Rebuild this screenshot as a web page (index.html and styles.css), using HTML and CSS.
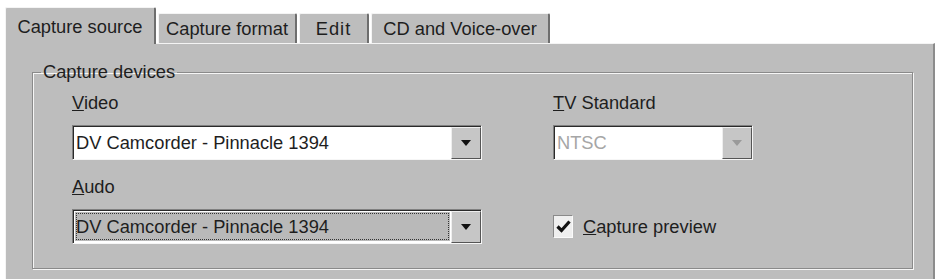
FILE: index.html
```html
<!DOCTYPE html>
<html lang="en">
<head>
    <meta charset="UTF-8">
    <title>Capture settings</title>
    <link rel="stylesheet" href="styles.css">
</head>
<body>
    <div class="dialog">
        <div class="tabs">
            <div class="tab active tab-source">Capture source</div>
            <div class="tab tab-format">Capture format</div>
            <div class="tab tab-edit">Edit</div>
            <div class="tab tab-cd">CD and Voice-over</div>
        </div>

        <div class="panel">
            <fieldset class="group">
                <legend>Capture devices</legend>
                <div class="fields">
                    <div class="field">
                        <div class="label"><u>V</u>ideo</div>
                        <div class="combo">
                            <span class="value">DV Camcorder - Pinnacle 1394</span>
                            <span class="drop"><span class="arrow"></span></span>
                        </div>
                    </div>

                    <div class="field">
                        <div class="label"><u>T</u>V Standard</div>
                        <div class="combo disabled">
                            <span class="value">NTSC</span>
                            <span class="drop"><span class="arrow"></span></span>
                        </div>
                    </div>

                    <div class="field">
                        <div class="label"><u>A</u>udo</div>
                        <div class="combo focused">
                            <span class="value">DV Camcorder - Pinnacle 1394</span>
                            <span class="drop"><span class="arrow"></span></span>
                        </div>
                    </div>

                    <div class="check-row">
                        <span class="checkbox">
                            <svg width="15" height="15" viewBox="0 0 15 15">
                                <path d="M1.5 7.5 L5.5 11.5 L13.5 2.5" fill="none" stroke="#111" stroke-width="3.2"/>
                            </svg>
                        </span>
                        <span class="label"><u>C</u>apture preview</span>
                    </div>
                </div>
            </fieldset>
        </div>
    </div>
</body>
</html>
```

FILE: styles.css
```css
   body {
       margin: 0;
       background: #ffffff;
       font-family: 'Liberation Sans', Arial, sans-serif;
       font-size: 18.3px;
       color: #1e1e1e;
       overflow: hidden;
   }

   .dialog {
       padding: 7px 2px 0 5px;
   }

/* 选项卡 */
   .tabs {
       display: flex;
       align-items: flex-end;
       height: 36px;
       position: relative;
       z-index: 1;
   }

   .tab {
       height: 30px;
       line-height: 29px;
       text-align: center;
       background: #bdbdbd;
       border-top: 1px solid #f4f4f4;
       border-left: 1px solid #f4f4f4;
       border-right: 2px solid #6e6e6e;
       margin-left: 2px;
       box-sizing: border-box;
       border-radius: 2px 2px 0 0;
       white-space: nowrap;
   }

   .tab.active {
       height: 37px;
       margin-bottom: -1px;
       margin-left: 0;
       line-height: 37px;
   }

   .tab-source { width: 151px; }
   .tab-format { width: 139px; }
   .tab-edit { width: 70px; letter-spacing: 1px; }
   .tab-cd { width: 179px; }

   .panel {
       background: #bdbdbd;
       border-top: 1px solid #f4f4f4;
       border-left: 1px solid #f4f4f4;
       border-right: 2px solid #8c8c8c;
       padding: 17px 20px 14px 26px;
       min-height: 236px;
       box-sizing: border-box;
   }

/* 分组框 */
   .group {
       margin: 0;
       padding: 9px 0 24px 39px;
       border: 1px solid #8a8a8a;
       box-shadow: inset 1px 1px 0 #f6f6f6, 1px 1px 0 #f6f6f6;
   }

   .group legend {
       margin-left: -31px;
       padding: 0 2px;
       line-height: 22px;
   }

   .fields {
       display: grid;
       grid-template-columns: 410px 200px;
       column-gap: 71px;
       row-gap: 16px;
   }

   .label {
       line-height: 22px;
   }

   .field .label {
       margin-bottom: 11px;
   }

/* 下拉框 */
   .combo {
       display: flex;
       height: 35px;
       background: #ffffff;
       border: 1px solid #808080;
       border-right-color: #f6f6f6;
       border-bottom-color: #f6f6f6;
       box-shadow: inset 1px 1px 0 #2a2a2a;
       box-sizing: border-box;
   }

   .combo .value {
       flex: 1;
       padding: 0 2px;
       margin: 1px 0 0 1px;
       line-height: 32px;
       white-space: nowrap;
   }

   .combo .drop {
       width: 30px;
       margin: 1px 0 0 0;
       display: flex;
       align-items: center;
       justify-content: center;
       background: #c6c6c6;
       border: 1px solid #eeeeee;
       border-right-color: #555555;
       border-bottom-color: #555555;
       box-sizing: border-box;
   }

   .arrow {
       width: 0;
       height: 0;
       border-left: 5px solid transparent;
       border-right: 5px solid transparent;
       border-top: 6px solid #111111;
   }

   .combo.disabled .value {
       color: #a6a6a6;
   }

   .combo.disabled .arrow {
       border-top-color: #9a9a9a;
   }

   .combo.focused .value {
       background: #b9b9b9;
       outline: 1px dotted #333333;
       outline-offset: -2px;
       margin: 2px 1px 2px 2px;
       line-height: 29px;
       padding: 0 1px;
   }

/* 复选框 */
   .check-row {
       display: flex;
       align-items: center;
       gap: 10px;
       align-self: end;
       height: 35px;
   }

   .checkbox {
       width: 20px;
       height: 23px;
       display: flex;
       align-items: center;
       justify-content: center;
       background: #efefef;
       border: 1px solid #8a8a8a;
       border-right-color: #fafafa;
       border-bottom-color: #fafafa;
       box-sizing: border-box;
   }
```
